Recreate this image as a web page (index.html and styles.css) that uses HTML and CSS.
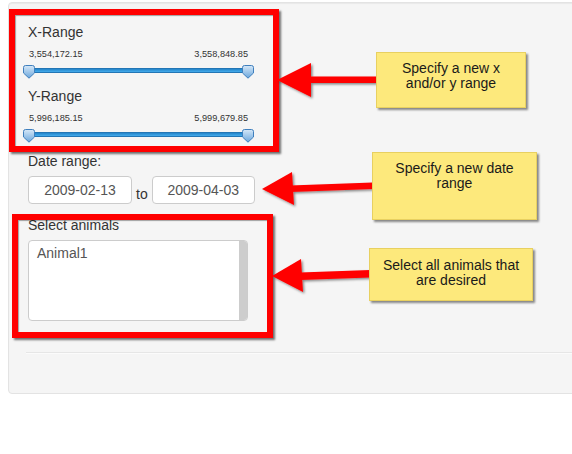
FILE: index.html
```html
<!DOCTYPE html>
<html>
<head>
<meta charset="utf-8">
<link rel="stylesheet" href="styles.css">
</head>
<body>
<div class="page">
  <div class="well">
    <div class="slider-group">
      <div class="lbl">X-Range</div>
      <div class="nums"><span>3,554,172.15</span><span>3,558,848.85</span></div>
      <div class="slider">
        <div class="track"></div>
        <svg class="handle handle-l" width="12" height="14" viewBox="0 0 12 14"><use href="#hdl"/></svg>
        <svg class="handle handle-r" width="12" height="14" viewBox="0 0 12 14"><use href="#hdl"/></svg>
      </div>
    </div>
    <div class="slider-group">
      <div class="lbl">Y-Range</div>
      <div class="nums"><span>5,996,185.15</span><span>5,999,679.85</span></div>
      <div class="slider">
        <div class="track"></div>
        <svg class="handle handle-l" width="12" height="14" viewBox="0 0 12 14"><use href="#hdl"/></svg>
        <svg class="handle handle-r" width="12" height="14" viewBox="0 0 12 14"><use href="#hdl"/></svg>
      </div>
    </div>
    <div class="date-group">
      <div class="lbl">Date range:</div>
      <div class="date-row">
        <div class="date-input w1">2009-02-13</div>
        <span class="to">to</span>
        <div class="date-input w2">2009-04-03</div>
      </div>
    </div>
    <div class="select-group">
      <div class="lbl">Select animals</div>
      <div class="select">
        <div class="options">Animal1</div>
        <div class="scrollbar"></div>
      </div>
    </div>
    <hr class="rule">
  </div>

  <div class="annotations">
    <div class="redbox box1"></div>
    <div class="redbox box2"></div>
    <svg class="arrows" width="572" height="454" viewBox="0 0 572 454">
      <defs>
        <filter id="sh" x="-20%" y="-20%" width="140%" height="140%">
          <feDropShadow dx="1.5" dy="1.5" stdDeviation="1" flood-color="#000" flood-opacity="0.45"/>
        </filter>
        <linearGradient id="hg" x1="0" y1="0" x2="0" y2="1">
          <stop offset="0" stop-color="#d6e8f8"/>
          <stop offset="1" stop-color="#6aa6dc"/>
        </linearGradient>
        <symbol id="hdl" viewBox="0 0 12 14">
          <path d="M0.5,2.5 Q0.5,0.5 2.5,0.5 H9.5 Q11.5,0.5 11.5,2.5 V8 L6,13.2 L0.5,8 Z" fill="url(#hg)" stroke="#3f7fbd" stroke-width="1"/>
        </symbol>
      </defs>
      <g fill="#ff0000" filter="url(#sh)">
        <polygon points="308,76.5 377,76.5 377,83 308,83"/>
        <polygon points="277,80 311,63 311,97"/>
        <polygon points="290,185.5 373,182.5 373,189 290,192"/>
        <polygon points="262,189 292,172 294,205"/>
        <polygon points="300,272.5 370,270 370,277.5 300,280"/>
        <polygon points="272,276 301,259 303,292"/>
      </g>
    </svg>
    <div class="note note1">Specify a new x<br>and/or y range</div>
    <div class="note note2">Specify a new date<br>range</div>
    <div class="note note3">Select all animals that<br>are desired</div>
  </div>
</div>
</body>
</html>
```

FILE: styles.css
```css
html, body {
  margin: 0;
  padding: 0;
  background: #ffffff;
  overflow: hidden;
}
body {
  width: 572px;
  height: 454px;
  font-family: "Liberation Sans", Arial, sans-serif;
  color: #333333;
}
.page {
  position: relative;
  width: 572px;
  height: 454px;
  overflow: hidden;
}
.well {
  margin: 2px 0 0 8px;
  width: 600px;
  box-sizing: border-box;
  padding: 19px 19px 19px 19px;
  background: #f5f5f5;
  border: 1px solid #e3e3e3;
  border-radius: 4px;
  box-shadow: inset 0 1px 1px rgba(0, 0, 0, 0.05);
}
.lbl {
  font-size: 14px;
  line-height: 20px;
  height: 20px;
  color: #333333;
}
.nums {
  width: 219px;
  margin: 6px 0 0 1px;
  display: flex;
  justify-content: space-between;
  font-size: 9.2px;
  line-height: 12px;
  height: 12px;
  color: #333333;
}
.slider {
  position: relative;
  box-sizing: border-box;
  padding-top: 8px;
  height: 26px;
  width: 222px;
}
.track {
  margin: 0 0 0 1px;
  width: 219px;
  height: 5px;
  box-sizing: border-box;
  border-radius: 2px;
  background: linear-gradient(#2384c9, #45acec);
  border: 1px solid #2376b5;
}
.handle {
  position: absolute;
  top: 5px;
  display: block;
}
.handle-l { left: -5px; }
.handle-r { left: 214px; }
.date-group {
  margin-top: 1px;
}
.date-row {
  margin-top: 5px;
  display: flex;
  align-items: flex-end;
  gap: 4px;
}
.date-input {
  height: 28px;
  box-sizing: border-box;
  background: #ffffff;
  border: 1px solid #cccccc;
  border-radius: 4px;
  font-size: 14px;
  line-height: 26px;
  text-align: center;
  color: #555555;
}
.w1 { width: 104px; }
.w2 { width: 103px; }
.to {
  font-size: 14px;
  line-height: 20px;
  color: #333333;
}
.select-group {
  margin-top: 11px;
}
.select {
  margin-top: 5px;
  width: 220px;
  height: 81px;
  box-sizing: border-box;
  display: flex;
  background: #ffffff;
  border: 1px solid #cccccc;
  border-radius: 4px;
  overflow: hidden;
}
.options {
  flex: 1;
  padding: 2px 8px;
  font-size: 14px;
  line-height: 20px;
  color: #555555;
}
.scrollbar {
  width: 8px;
  background: #cdcdcd;
}
.rule {
  margin: 31px 0 20px -2px;
  height: 0;
  border: 0;
  border-top: 1px solid #e6e6e6;
  border-bottom: 1px solid #fbfbfb;
}
.annotations {
  position: absolute;
  left: 0;
  top: 0;
  width: 572px;
  height: 454px;
  pointer-events: none;
}
.redbox {
  position: absolute;
  box-sizing: border-box;
  border: 6px solid #ff0000;
  box-shadow: 2px 2px 2px rgba(0, 0, 0, 0.55), inset 1px 1px 1px rgba(0, 0, 0, 0.35);
}
.box1 { left: 9px; top: 9px; width: 270px; height: 143px; }
.box2 { left: 12px; top: 214px; width: 261px; height: 124px; }
.arrows {
  position: absolute;
  left: 0;
  top: 0;
}
.note {
  position: absolute;
  box-sizing: border-box;
  background: #fde97c;
  border: 1px solid #e8d060;
  box-shadow: 2px 2px 2px rgba(0, 0, 0, 0.45);
  font-size: 14px;
  line-height: 15px;
  color: #1a1a1a;
  text-align: center;
}
.note1 { left: 376px; top: 52px; width: 150px; height: 56px; padding-top: 7.5px; }
.note2 { left: 372px; top: 152px; width: 165px; height: 68px; padding-top: 7.5px; }
.note3 { left: 369px; top: 248px; width: 164px; height: 53px; padding-top: 8.5px; }
```
